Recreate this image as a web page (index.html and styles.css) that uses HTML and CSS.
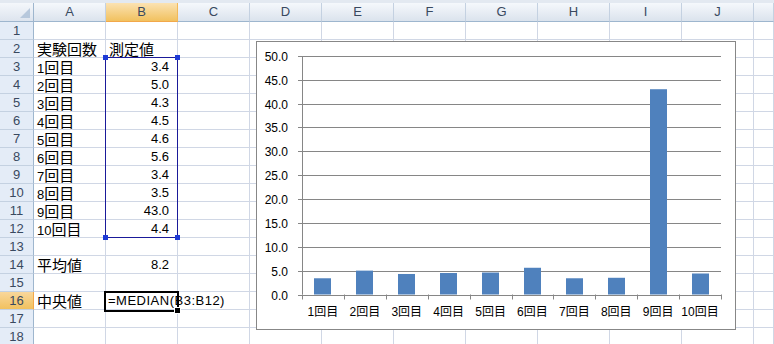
FILE: index.html
```html
<!DOCTYPE html>
<html lang="ja">
<head>
    <meta charset="UTF-8">
    <title>中央値</title>
    <link rel="stylesheet" href="styles.css">
</head>
<body>
    <div class="strip"></div>
    <div class="sheet" id="sheet"></div>

    <script>
        const sheet = document.getElementById('sheet');
        const cols = ['A', 'B', 'C', 'D', 'E', 'F', 'G', 'H', 'I', 'J'];
        const values = [3.4, 5.0, 4.3, 4.5, 4.6, 5.6, 3.4, 3.5, 43.0, 4.4];

        // cell contents
        const cells = { A2: '実験回数', B2: '測定値', A14: '平均値', A16: '中央値' };
        const nums = { B14: '8.2' };
        values.forEach((v, i) => {
            cells['A' + (i + 3)] = (i + 1) + '回目';
            nums['B' + (i + 3)] = v.toFixed(1);
        });

        function wrapJa(text) {
            return text.replace(/([^\x00-\x7f]+)/g, '<span class="ja">$1</span>');
        }

        function add(cls, html) {
            const el = document.createElement('div');
            el.className = cls;
            el.innerHTML = html || '';
            sheet.appendChild(el);
            return el;
        }

        add('corner');
        cols.forEach(c => add('col-head' + (c === 'B' ? ' on' : ''), c));
        add('col-head', '');

        for (let r = 1; r <= 18; r++) {
            add('row-head' + (r === 16 ? ' on' : ''), r);
            cols.forEach(c => {
                const key = c + r;
                if (nums[key]) add('cell num', nums[key]);
                else if (key === 'B16') add('cell formula', '=MEDIAN(B3:B12)');
                else add('cell', cells[key] ? wrapJa(cells[key]) : '');
            });
            add('cell', '');
        }

        // selection B3:B12 and active cell B16
        const sel = add('selection');
        ['tl', 'tr', 'bl', 'br'].forEach(p => {
            const h = document.createElement('span');
            h.className = 'handle ' + p;
            sel.appendChild(h);
        });
        add('active', '<span class="fill"></span>');

        // chart
        const ns = 'http://www.w3.org/2000/svg';
        const chart = add('chart');
        const svg = document.createElementNS(ns, 'svg');
        svg.setAttribute('width', 478);
        svg.setAttribute('height', 287);
        chart.appendChild(svg);

        function el(tag, attrs, text) {
            const e = document.createElementNS(ns, tag);
            for (const k in attrs) e.setAttribute(k, attrs[k]);
            if (text) e.textContent = text;
            svg.appendChild(e);
            return e;
        }

        const x0 = 45, x1 = 464, y0 = 252.5, unit = 4.774;
        const step = (x1 - x0) / 10;

        for (let v = 0; v <= 50; v += 5) {
            const y = Math.round(y0 - v * unit) + 0.5;
            el('line', { x1: x0 - 4, x2: x1, y1: y, y2: y, class: 'grid' });
            el('text', { x: 31, y: y + 4, class: 'ylabel' }, v.toFixed(1));
        }
        el('line', { x1: x0 + 0.5, x2: x0 + 0.5, y1: Math.round(y0 - 50 * unit), y2: y0, class: 'grid' });

        for (let k = 0; k <= 10; k++) {
            const x = Math.round(x0 + k * step) + 0.5;
            el('line', { x1: x, x2: x, y1: y0, y2: y0 + 5, class: 'grid' });
        }

        values.forEach((v, i) => {
            const cx = x0 + (i + 0.5) * step;
            const h = v * unit;
            el('rect', { x: Math.round(cx - 8.5), y: y0 - h, width: 17, height: h, class: 'bar' });
            el('text', { x: cx, y: 274, class: 'xlabel' }, (i + 1) + '回目');
        });
    </script>
</body>
</html>
```

FILE: styles.css
```css
body {
    margin: 0;
    background-color: #fff;
    font-family: "Liberation Sans", "Noto Sans CJK JP", sans-serif;
    overflow: hidden;
}

.strip {
    height: 3px;
    background-color: #e3e9f1;
}

.sheet {
    position: relative;
    display: grid;
    grid-template-columns: 34px repeat(10, 72px) 1fr;
    grid-template-rows: 19px;
    grid-auto-rows: 18px;
}

.corner {
    position: relative;
    background: linear-gradient(#f4f7fb, #dde4ee);
    border-right: 1px solid #9eb6ce;
    border-bottom: 1px solid #9eb6ce;
}

.corner::after {
    content: "";
    position: absolute;
    right: 3px;
    bottom: 3px;
    border-left: 10px solid transparent;
    border-bottom: 10px solid #b7c8dc;
}

.col-head {
    background: linear-gradient(#f5f8fc, #dbe3ed);
    border-right: 1px solid #c4d1e1;
    border-bottom: 1px solid #9eb6ce;
    color: #39495f;
    font-size: 13px;
    line-height: 18px;
    text-align: center;
}

.col-head.on {
    background: linear-gradient(#fbe2b2, #f1c15f);
    border-right-color: #f2b95a;
    border-bottom-color: #f2a84a;
}

.row-head {
    background-color: #e4ecf7;
    border-right: 1px solid #9eb6ce;
    border-bottom: 1px solid #c4d1e1;
    color: #39495f;
    font-size: 13px;
    line-height: 18px;
    text-align: center;
}

.row-head.on {
    background: linear-gradient(#f9d79b, #f1c15f);
    border-right-color: #f2a84a;
}

.cell {
    border-right: 1px solid #d0d7e5;
    border-bottom: 1px solid #d0d7e5;
    padding: 0 3px;
    font-size: 13px;
    line-height: 18px;
    color: #000;
    white-space: nowrap;
}

.cell .ja {
    font-family: "Noto Sans CJK JP", sans-serif;
    font-size: 15px;
}

.cell.num {
    text-align: right;
    padding-right: 8px;
}

.cell.formula {
    position: relative;
    z-index: 2;
    letter-spacing: 0.5px;
    padding-left: 2px;
}

.selection {
    position: absolute;
    left: 105px;
    top: 54px;
    width: 73px;
    height: 181px;
    box-sizing: border-box;
    border: 1px solid #1a1a9a;
    z-index: 3;
}

.handle {
    position: absolute;
    width: 5px;
    height: 5px;
    background-color: #1e3ad6;
}

.handle.tl { left: -3px; top: -3px; }
.handle.tr { right: -3px; top: -3px; }
.handle.bl { left: -3px; bottom: -3px; }
.handle.br { right: -3px; bottom: -3px; }

.active {
    position: absolute;
    left: 104px;
    top: 288px;
    width: 75px;
    height: 21px;
    box-sizing: border-box;
    border: 2px solid #000;
    z-index: 3;
}

.fill {
    position: absolute;
    right: -4px;
    bottom: -4px;
    width: 5px;
    height: 5px;
    background-color: #000;
    border: 1px solid #fff;
}

.chart {
    position: absolute;
    left: 256px;
    top: 38px;
    width: 480px;
    height: 289px;
    box-sizing: border-box;
    border: 1px solid #878787;
    background-color: #fff;
    z-index: 4;
}

.chart svg {
    display: block;
}

.chart .grid {
    stroke: #868686;
    stroke-width: 1;
}

.chart .bar {
    fill: #4f81bd;
}

.chart .ylabel {
    font-family: "Liberation Sans", sans-serif;
    font-size: 12px;
    text-anchor: end;
    fill: #000;
}

.chart .xlabel {
    font-family: "Liberation Sans", "Noto Sans CJK JP", sans-serif;
    font-size: 12px;
    text-anchor: middle;
    fill: #000;
}
```
